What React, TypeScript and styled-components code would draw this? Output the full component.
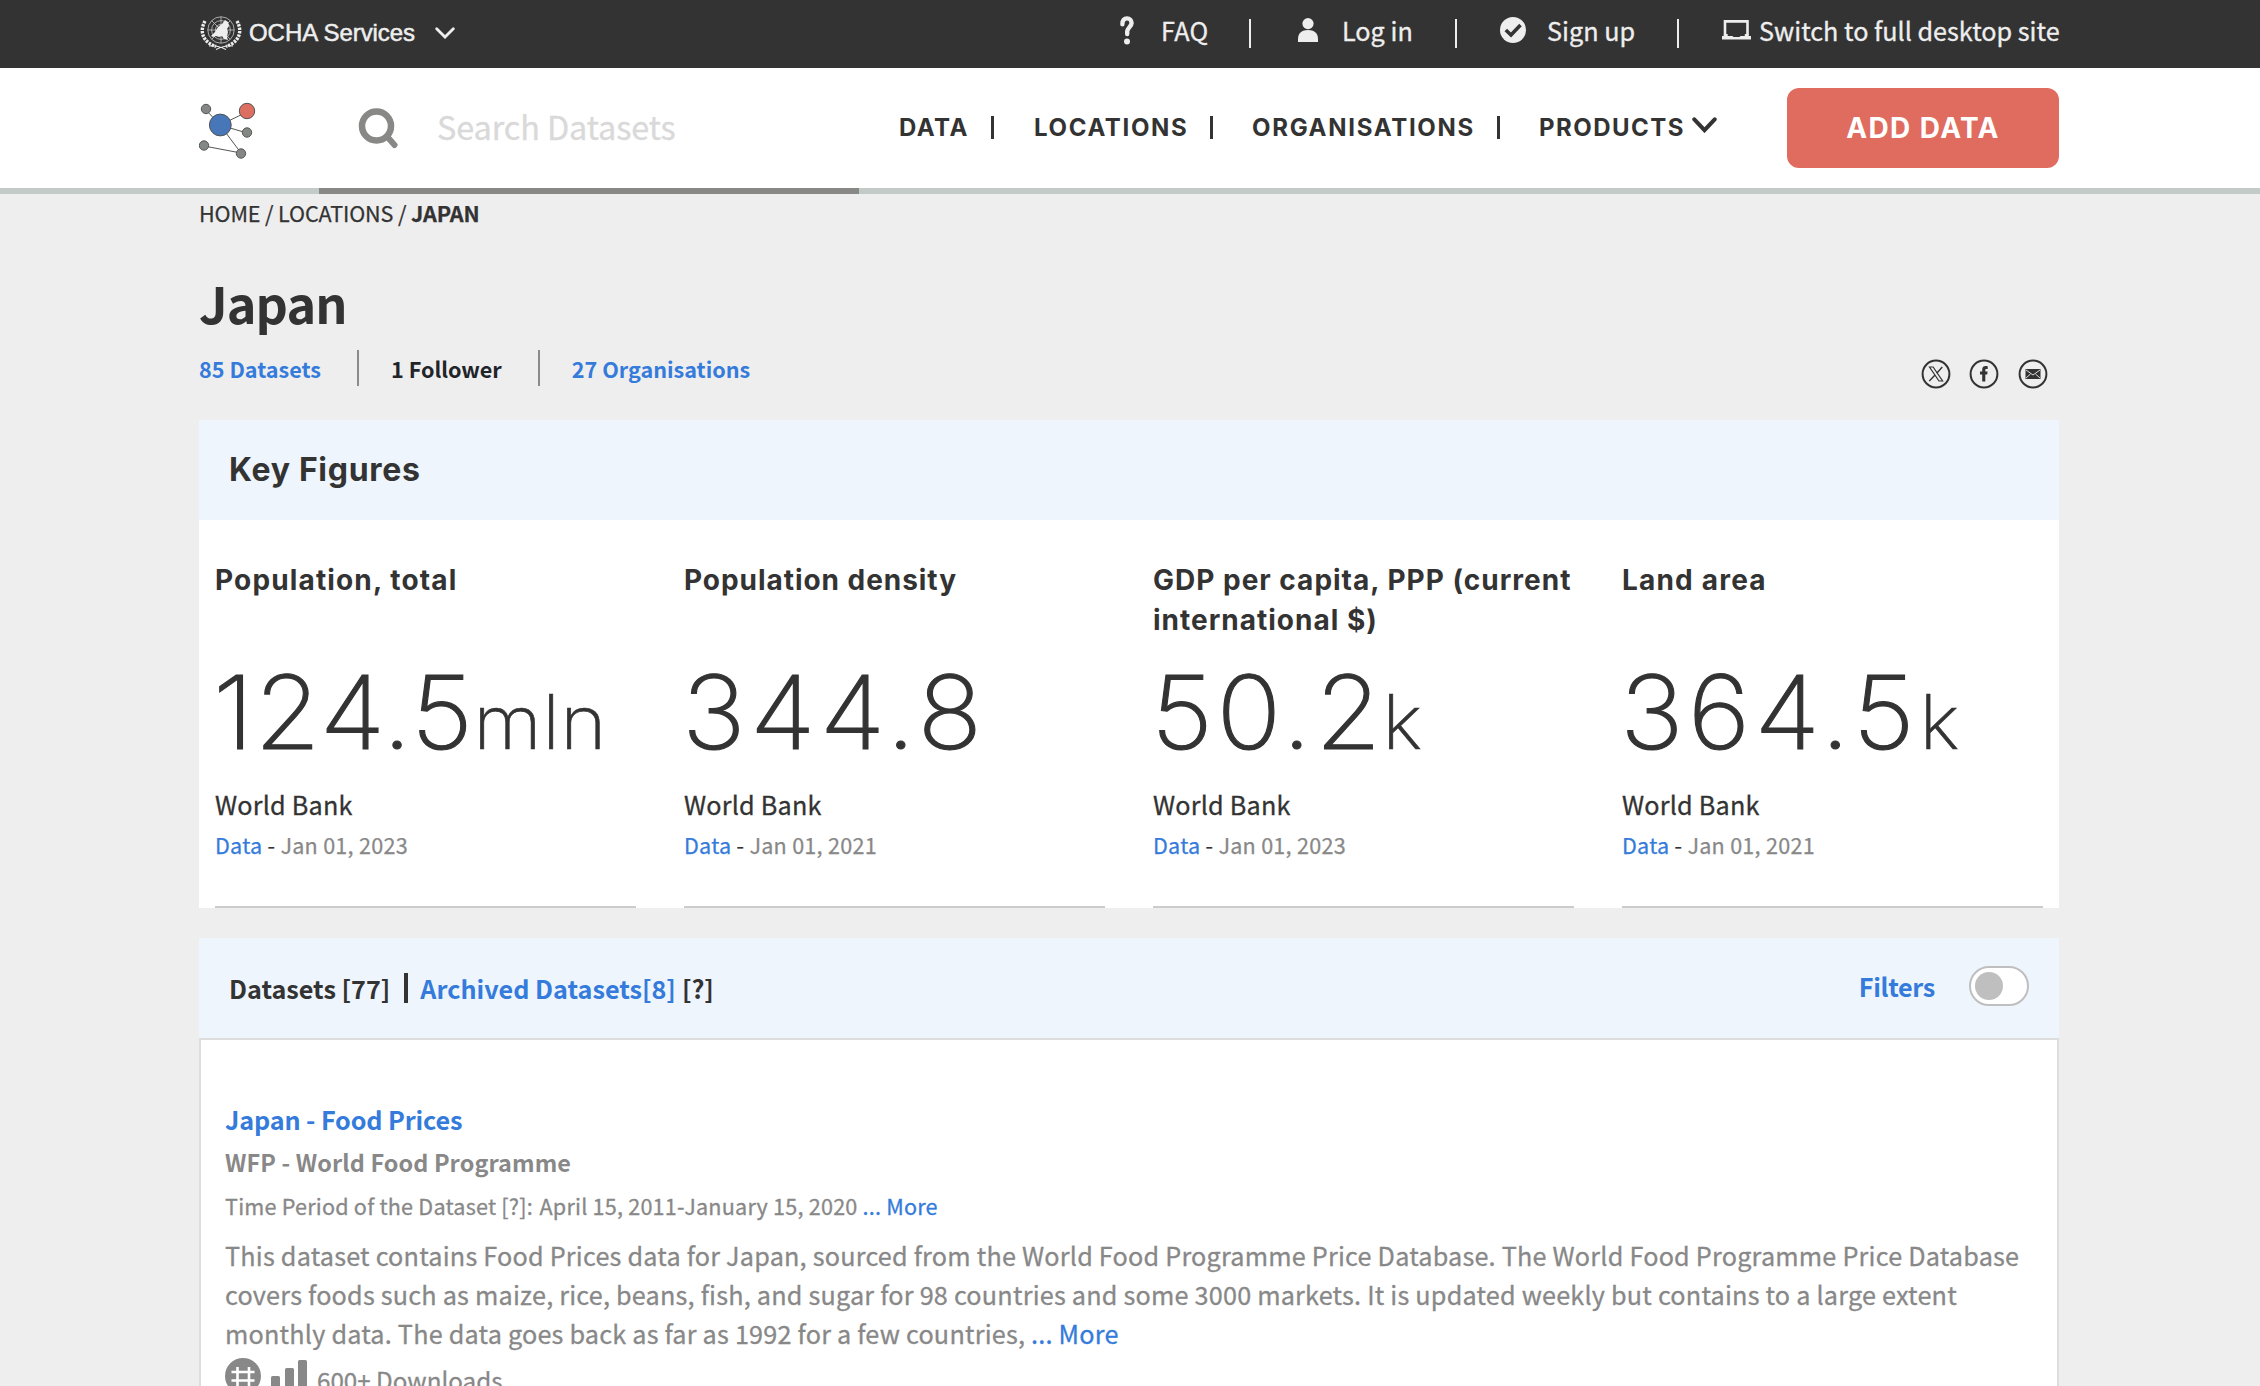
import React from "react";
import styled, { createGlobalStyle } from "styled-components";

const sans = '"Noto Sans CJK SC", "Noto Sans", sans-serif';
const display = 'Inter, "Open Sans", sans-serif';
const ink = "#333333";
const link = "#347bdb";
const muted = "#888888";

const GlobalStyle = createGlobalStyle`
  * { box-sizing: border-box; }
  body { margin: 0; background: #eeeeee; color: ${ink}; font-family: ${sans}; overflow: hidden; }
  a { color: inherit; text-decoration: none; }
  svg { display: block; flex: none; }
`;

const Page = styled.div`
  width: 2260px;
  height: 1386px;
  overflow: hidden;
  background: #eeeeee;
`;

const Container = styled.div`
  width: 1860px;
  margin-left: 199px;
`;

/* ---------- top bar ---------- */

const TopBar = styled.div`
  height: 68px;
  background: #333333;
  color: #eeeeee;
`;

const TopInner = styled(Container)`
  display: grid;
  grid-template-columns: 921px 129px 49px 157px 45px 177px 45px 337px;
  grid-template-rows: 60px;
  align-items: center;
`;

const OchaLink = styled.a`
  display: flex;
  align-items: center;
  height: 40px;
  margin-top: 6px;
`;

const OchaLabel = styled.span`
  margin: 0 20px 0 7px;
  font: 400 24px/28px "Liberation Sans", Arial, sans-serif;
  letter-spacing: -0.05px;
  -webkit-text-stroke: 0.5px;
`;

const TopItem = styled.a<{ $iconWidth: number; $track?: number }>`
  display: grid;
  grid-template-columns: ${(p) => p.$iconWidth}px auto;
  align-items: center;
  font-size: 25.2px;
  line-height: 60px;
  letter-spacing: ${(p) => p.$track ?? 0}px;
  -webkit-text-stroke: 0.3px;
  white-space: nowrap;
`;

const TopDivider = styled.i`
  width: 2px;
  height: 29px;
  margin-top: 7px;
  background: #eeeeee;
`;

/* ---------- header ---------- */

const Header = styled.header`
  height: 126px;
  background: #ffffff;
  border-bottom: 6px solid #c2cbc8;
`;

const HeaderInner = styled(Container)`
  display: flex;
  height: 126px;
`;

const LogoLink = styled.a`
  width: 120px;
  padding-top: 31px;
`;

const SearchBox = styled.label`
  display: flex;
  align-items: center;
  width: 540px;
  height: 126px;
  padding-left: 38px;
  border-bottom: 6px solid #888986;
`;

const SearchText = styled.span`
  margin: -4px 0 0 38px;
  font-size: 32.4px;
  line-height: 48px;
  letter-spacing: -0.1px;
  color: #d9d9d9;
  -webkit-text-stroke: 0.3px;
`;

const Nav = styled.nav`
  display: grid;
  grid-template-columns: 93px 42px 177px 41px 246px 41px 248px;
  align-items: center;
  height: 120px;
  padding-left: 40px;
  font: 700 24px/40px ${display};
`;

const NavLink = styled.a<{ $track: number }>`
  display: flex;
  align-items: center;
  gap: 7px;
  letter-spacing: ${(p) => p.$track}px;
`;

const NavDivider = styled.i`
  width: 3px;
  height: 23px;
  margin: -1px 0 0 -1px;
  background: ${ink};
`;

const AddButton = styled.button`
  width: 272px;
  height: 80px;
  margin-top: 20px;
  padding: 0;
  border: 0;
  border-radius: 12px;
  background: #e06c60;
  color: #ffffff;
  font: 700 28px/40px ${display};
  letter-spacing: 1.4px;
`;

/* ---------- title block ---------- */

const Breadcrumb = styled.div`
  padding-top: 4px;
  height: 79px;
  font-size: 21.6px;
  line-height: 30px;
  letter-spacing: -0.15px;
  -webkit-text-stroke: 0.25px;
`;

const Title = styled.h1`
  margin: 0;
  height: 77px;
  font-size: 50.4px;
  font-weight: 700;
  line-height: 60px;
  letter-spacing: -0.9px;
`;

const MetaRow = styled.div`
  display: flex;
  justify-content: space-between;
  height: 70px;
  font-size: 21.6px;
  font-weight: 700;
  line-height: 38px;
`;

const Stats = styled.div`
  display: flex;
  height: 36px;
`;

const Stat = styled.a<{ $link?: boolean }>`
  color: ${(p) => (p.$link ? link : "#212429")};
  & + & {
    margin-left: 36px;
    padding-left: 32px;
    border-left: 2px solid #8b8b8b;
  }
`;

const Social = styled.div`
  display: flex;
  gap: 16px;
  padding: 8px 10px 0 0;
`;

/* ---------- key figures ---------- */

const SectionHead = styled.div`
  display: flex;
  align-items: center;
  justify-content: space-between;
  height: 100px;
  padding: 0 30px 0 30px;
  background: #eef5fc;
`;

const SectionTitle = styled.h2`
  margin: 0;
  font: 700 32px/44px ${display};
  letter-spacing: 0.7px;
`;

const Figures = styled.div`
  display: grid;
  grid-template-columns: repeat(4, 421px);
  column-gap: 48px;
  height: 388px;
  margin-bottom: 30px;
  padding-left: 16px;
  background: #ffffff;
`;

const Figure = styled.div`
  padding-top: 40px;
  border-bottom: 2px solid #cccccc;
  white-space: nowrap;
`;

const FigureTitle = styled.h3<{ $track: number }>`
  height: 80px;
  margin: 0;
  font: 700 28px/40px ${display};
  letter-spacing: ${(p) => p.$track}px;
  white-space: pre-line;
`;

const FigureValue = styled.div<{ $track: number }>`
  margin: 20px 0 0 -2px;
  height: 104px;
  font: 200 102px/104px ${display};
  letter-spacing: ${(p) => p.$track}px;
  transform: scaleX(1.05);
  transform-origin: left;
  -webkit-text-stroke: 1.1px;
`;

const FigureUnit = styled.span<{ $gap: number; $track: number }>`
  margin-left: ${(p) => p.$gap}px;
  font-size: 75px;
  letter-spacing: ${(p) => p.$track}px;
  -webkit-text-stroke: 0.6px;
`;

const FigureSource = styled.div`
  margin-top: 22px;
  font-size: 25.2px;
  line-height: 36px;
  letter-spacing: 0.2px;
  -webkit-text-stroke: 0.3px;
`;

const FigureDate = styled.div`
  margin-top: 8px;
  font-size: 21.6px;
  line-height: 30px;
  letter-spacing: 0.25px;
  -webkit-text-stroke: 0.25px;
`;

const Link = styled.a`
  color: ${link};
`;

const Muted = styled.span`
  color: ${muted};
`;

/* ---------- datasets ---------- */

const Tabs = styled.div`
  display: flex;
  align-items: center;
  font-size: 25.2px;
  font-weight: 700;
  line-height: 40px;
`;

const TabDivider = styled.i`
  width: 4px;
  height: 30px;
  margin: 0 12px 0 14px;
  background: ${ink};
`;

const Help = styled.span`
  margin-left: 6px;
`;

const FilterToggle = styled.div`
  display: flex;
  align-items: center;
  gap: 34px;
  margin-top: -4px;
  color: ${link};
  font-size: 25.2px;
  font-weight: 700;
  line-height: 40px;
  letter-spacing: -0.3px;
`;

const Switch = styled.span`
  display: flex;
  align-items: center;
  width: 60px;
  height: 40px;
  padding-left: 4px;
  border: 2px solid #bfbfbf;
  border-radius: 20px;
  background: #ffffff;
`;

const Knob = styled.span`
  width: 28px;
  height: 28px;
  border-radius: 50%;
  background: #bfbfbf;
`;

const DatasetList = styled.div`
  height: 400px;
  padding: 61px 20px 0 24px;
  border: 2px solid #dddddd;
  background: #ffffff;
  color: ${muted};
`;

const DatasetTitle = styled.a`
  display: block;
  color: ${link};
  font-size: 25.2px;
  font-weight: 700;
  line-height: 36px;
  letter-spacing: -0.12px;
`;

const DatasetOrg = styled.div`
  margin-top: 10px;
  font-size: 23.4px;
  font-weight: 700;
  line-height: 30px;
  letter-spacing: 0.12px;
`;

const DatasetPeriod = styled.div`
  display: flex;
  margin-top: 14px;
  font-size: 21.6px;
  line-height: 30px;
  letter-spacing: 0.21px;
  -webkit-text-stroke: 0.3px;
`;

const Period = styled.span`
  margin: 0 5px 0 6.5px;
`;

const Description = styled.p`
  margin: 15px 0 0;
  font-size: 25.2px;
  line-height: 39px;
  letter-spacing: 0.217px;
  white-space: nowrap;
  -webkit-text-stroke: 0.3px;
`;

const DatasetFooter = styled.div`
  display: flex;
  padding-top: 5px;
  font-size: 24.2px;
  line-height: 44px;
  -webkit-text-stroke: 0.3px;
`;

const Downloads = styled.span`
  margin-left: 10px;
`;

/* ---------- drawings ---------- */

const Emblem = () => (
  <svg width="43" height="36" viewBox="0 0 43 36" fill="none" stroke="#eee">
    <g strokeWidth=".8" opacity=".8">
      <circle cx="22" cy="15" r="13.2" />
      <circle cx="22" cy="15" r="9.4" />
      <circle cx="22" cy="15" r="5.6" />
      <path d="M22 1.8v26.4M8.8 15h26.4M12.7 5.7l18.600 18.600M31.300 5.700L12.700 24.300" />
    </g>
    <path
      fill="#eee"
      stroke="none"
      d="M12 21l4-4 3-5 4-3 3-4 3 2 1 4-2 3 1 3-1 5 1 3-4-1-2-3-3 1-3-1-3 1z"
    />
    <path strokeWidth="3.400" strokeDasharray="2.400 1.100" d="M6 6C0 17 4 27 17 31.500" />
    <path strokeWidth="3.400" strokeDasharray="2.400 1.100" d="M38 6c6 11 2 21-11 25.500" />
    <path strokeWidth="1.200" d="M10 31c6-1 10 0 17 3.500M34 31c-6-1-10 0-17 3.500" />
  </svg>
);

const Chevron = ({ w, h, stroke, sw }: { w: number; h: number; stroke: string; sw: number }) => (
  <svg width={w} height={h} viewBox={`0 0 ${w} ${h}`} fill="none">
    <path
      d={`M${sw / 2 + 0.3} ${sw / 2 + 0.3}L${w / 2} ${h - sw * 0.7}L${w - sw / 2 - 0.3} ${sw / 2 + 0.3}`}
      stroke={stroke}
      strokeWidth={sw}
      strokeLinecap="round"
    />
  </svg>
);

const ProductsCaret = styled.span`
  margin-top: -6px;
`;

const QuestionIcon = () => (
  <svg width="14" height="29" viewBox="0 0 14 29" fill="none">
    <path
      d="M2.400 8.200C2.400 4.200 4.300 2.400 7 2.400s4.600 1.900 4.600 4.600c0 3.300-4.400 5-4.400 8.600v2.400"
      stroke="#eee"
      strokeWidth="4.400"
      strokeLinecap="round"
    />
    <circle cx="7" cy="25.400" r="3" fill="#eee" />
  </svg>
);

const PersonIcon = () => (
  <svg width="20" height="24" viewBox="0 0 20 24" fill="#eee">
    <circle cx="10" cy="5.600" r="5.600" />
    <path d="M0 24v-3c0-6 4-9 10-9s10 3 10 9v3z" />
  </svg>
);

const CheckIcon = () => (
  <svg width="26" height="26" viewBox="0 0 26 26">
    <circle cx="13" cy="13" r="13" fill="#eee" />
    <path d="M5.800 13l5.200 5L20.500 8" fill="none" stroke="#333" strokeWidth="3.600" />
  </svg>
);

const LaptopIcon = () => (
  <svg width="29" height="20" viewBox="0 0 29 20">
    <path d="M3 14.500V1.400h22.500v13.100" fill="none" stroke="#eee" strokeWidth="2.600" />
    <path d="M0 16h10.500l1 1h6l1-1H29v3.500H0z" fill="#eee" />
    <path d="M1.700 14h4v2h-4zM22.800 14h4v2h-4z" fill="#eee" />
  </svg>
);

const Logo = () => (
  <svg width="58" height="62" viewBox="0 0 58 62" stroke="#555" strokeWidth="1">
    <path d="M7 11l14 15L48 13M21 26l27 8M21 26l21 28L5 47" fill="none" />
    <g fill="#838885">
      <circle cx="7" cy="10" r="4.700" />
      <circle cx="48" cy="33.500" r="4.700" />
      <circle cx="5" cy="46.500" r="4.700" />
      <circle cx="42" cy="54.500" r="4.700" />
    </g>
    <circle cx="48" cy="12" r="7.700" fill="#dc6f62" />
    <circle cx="21.300" cy="26" r="10.900" fill="#4776b9" />
  </svg>
);

const SearchIcon = () => (
  <svg width="42" height="41" viewBox="0 0 42 41" fill="none" stroke="#888986">
    <circle cx="19.500" cy="18" r="14.500" strokeWidth="6.500" />
    <path d="M30.500 29l7 8" strokeWidth="6" strokeLinecap="round" />
  </svg>
);

const Ring = ({ children }: { children: React.ReactNode }) => (
  <svg width="32.500" height="32" viewBox="0 0 32.500 32">
    <circle cx="16" cy="16" r="13.400" fill="none" stroke="#333" strokeWidth="2" />
    {children}
  </svg>
);

const HashIcon = () => (
  <svg width="36" height="36" viewBox="0 0 36 36">
    <circle cx="18" cy="18" r="18" fill="#888" />
    <path d="M6.500 14h23M6.500 22.500h23M12.500 9v19M24 9v19" stroke="#fff" strokeWidth="2.600" />
  </svg>
);

const BarsGraphic = styled.svg`
  margin-left: 10px;
`;

const BarsIcon = () => (
  <BarsGraphic width="36" height="36" viewBox="0 0 36 36" fill="#888">
    <rect x="0" y="18" width="9" height="18" rx="1.500" />
    <rect x="14" y="10" width="9" height="26" rx="1.500" />
    <rect x="27" y="2" width="9" height="34" rx="1.500" />
  </BarsGraphic>
);

/* ---------- data ---------- */

const figures = [
  { title: "Population, total", tt: 1.15, value: "124.5", vt: 0.7, unit: "mln", ut: 0.4, gap: -0.5, date: "Jan 01, 2023" },
  { title: "Population density", tt: 0.95, value: "344.8", vt: 4.1, unit: "", ut: 0, gap: 0, date: "Jan 01, 2021" },
  { title: "GDP per capita, PPP (current\ninternational $)", tt: 1.0, value: "50.2", vt: 3.4, unit: "k", ut: 0, gap: -2.5, date: "Jan 01, 2023" },
  { title: "Land area", tt: 1.2, value: "364.5", vt: 4, unit: "k", ut: 0, gap: 0.5, date: "Jan 01, 2021" },
];

export default function App() {
  return (
    <Page>
      <GlobalStyle />
      <TopBar>
        <TopInner>
          <OchaLink>
            <Emblem />
            <OchaLabel>OCHA Services</OchaLabel>
            <Chevron w={20} h={12} stroke="#eee" sw={2.8} />
          </OchaLink>
          <TopItem $iconWidth={41} $track={0.3}>
            <QuestionIcon />
            FAQ
          </TopItem>
          <TopDivider />
          <TopItem $iconWidth={44}>
            <PersonIcon />
            Log in
          </TopItem>
          <TopDivider />
          <TopItem $iconWidth={47}>
            <CheckIcon />
            Sign up
          </TopItem>
          <TopDivider />
          <TopItem $iconWidth={37}>
            <LaptopIcon />
            Switch to full desktop site
          </TopItem>
        </TopInner>
      </TopBar>

      <Header>
        <HeaderInner>
          <LogoLink>
            <Logo />
          </LogoLink>
          <SearchBox>
            <SearchIcon />
            <SearchText>Search Datasets</SearchText>
          </SearchBox>
          <Nav>
            <NavLink $track={1.5}>DATA</NavLink>
            <NavDivider />
            <NavLink $track={1.65}>LOCATIONS</NavLink>
            <NavDivider />
            <NavLink $track={1.7}>ORGANISATIONS</NavLink>
            <NavDivider />
            <NavLink $track={1.45}>
              PRODUCTS
              <ProductsCaret>
                <Chevron w={25} h={16} stroke={ink} sw={4} />
              </ProductsCaret>
            </NavLink>
          </Nav>
          <AddButton>ADD DATA</AddButton>
        </HeaderInner>
      </Header>

      <Container>
        <Breadcrumb>
          HOME / LOCATIONS / <b>JAPAN</b>
        </Breadcrumb>
        <Title>Japan</Title>
        <MetaRow>
          <Stats>
            <Stat $link>85 Datasets</Stat>
            <Stat>1 Follower</Stat>
            <Stat $link>27 Organisations</Stat>
          </Stats>
          <Social>
            <Ring>
              <path d="M9.500 9h3.600l9.500 14H19z" fill="none" stroke="#333" strokeWidth="1.200" />
              <path d="M22.300 9l-5.600 6.200M14.800 17.200L9.300 23" stroke="#333" strokeWidth="1.400" />
            </Ring>
            <Ring>
              <path
                d="M14.200 23.500v-6.900H12v-3h2.200v-1.900c0-2.500 1.400-3.600 3.500-3.600.9 0 1.600.1 2 .2v2.600h-1.300c-.8 0-1.100.4-1.100 1.100v1.600h2.300l-.4 3h-1.900v6.900z"
                fill="#333"
              />
            </Ring>
            <Ring>
              <rect x="8.500" y="11" width="15" height="10" fill="#333" />
              <path d="M9 12l7 5 7-5M9 20l4.500-4M23 20l-4.500-4" fill="none" stroke="#eee" strokeWidth=".9" />
            </Ring>
          </Social>
        </MetaRow>

        <SectionHead>
          <SectionTitle>Key Figures</SectionTitle>
        </SectionHead>
        <Figures>
          {figures.map((f) => (
            <Figure key={f.title}>
              <FigureTitle $track={f.tt}>{f.title}</FigureTitle>
              <FigureValue $track={f.vt}>
                {f.value}
                {f.unit && (
                  <FigureUnit $gap={f.gap} $track={f.ut}>
                    {f.unit}
                  </FigureUnit>
                )}
              </FigureValue>
              <FigureSource>World Bank</FigureSource>
              <FigureDate>
                <Link>Data</Link> - <Muted>{f.date}</Muted>
              </FigureDate>
            </Figure>
          ))}
        </Figures>

        <SectionHead>
          <Tabs>
            Datasets [77]
            <TabDivider />
            <Link>Archived Datasets[8]</Link>
            <Help>[?]</Help>
          </Tabs>
          <FilterToggle>
            Filters
            <Switch>
              <Knob />
            </Switch>
          </FilterToggle>
        </SectionHead>
        <DatasetList>
          <DatasetTitle>Japan - Food Prices</DatasetTitle>
          <DatasetOrg>WFP - World Food Programme</DatasetOrg>
          <DatasetPeriod>
            Time Period of the Dataset [?]:
            <Period>April 15, 2011-January 15, 2020</Period>
            <Link>... More</Link>
          </DatasetPeriod>
          <Description>
            This dataset contains Food Prices data for Japan, sourced from the World Food Programme Price Database. The
            World Food Programme Price Database
            <br />
            covers foods such as maize, rice, beans, fish, and sugar for 98 countries and some 3000 markets. It is updated
            weekly but contains to a large extent
            <br />
            monthly data. The data goes back as far as 1992 for a few countries, <Link>... More</Link>
          </Description>
          <DatasetFooter>
            <HashIcon />
            <BarsIcon />
            <Downloads>600+ Downloads</Downloads>
          </DatasetFooter>
        </DatasetList>
      </Container>
    </Page>
  );
}
